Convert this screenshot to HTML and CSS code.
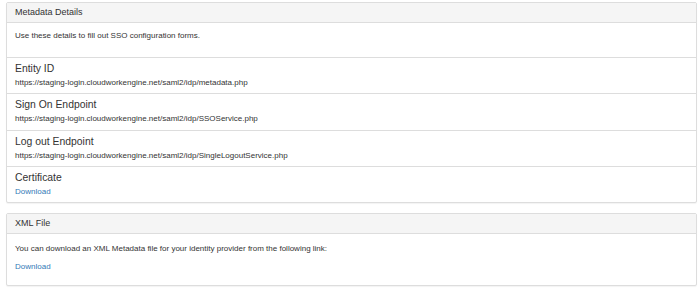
FILE: index.html
```html
<!DOCTYPE html>
<html lang="en">
<head>
    <meta charset="UTF-8">
    <meta name="viewport" content="width=device-width, initial-scale=1.0">
    <title>Metadata Details</title>
    <link rel="stylesheet" href="styles.css">
</head>
<body>
<div class="page">
    <div class="panel">
        <div class="panel-heading">Metadata Details</div>
        <div class="panel-body intro">
            <p>Use these details to fill out SSO configuration forms.</p>
        </div>
        <ul class="list-group">
            <li class="list-group-item">
                <h4>Entity ID</h4>
                <p>https://staging-login.cloudworkengine.net/saml2/idp/metadata.php</p>
            </li>
            <li class="list-group-item">
                <h4>Sign On Endpoint</h4>
                <p>https://staging-login.cloudworkengine.net/saml2/idp/SSOService.php</p>
            </li>
            <li class="list-group-item">
                <h4>Log out Endpoint</h4>
                <p>https://staging-login.cloudworkengine.net/saml2/idp/SingleLogoutService.php</p>
            </li>
            <li class="list-group-item">
                <h4>Certificate</h4>
                <p><a href="#">Download</a></p>
            </li>
        </ul>
    </div>

    <div class="panel">
        <div class="panel-heading">XML File</div>
        <div class="panel-body">
            <p>You can download an XML Metadata file for your identity provider from the following link:</p>
            <p><a href="#">Download</a></p>
        </div>
    </div>
</div>
</body>
</html>
```

FILE: styles.css
```css
body {
    margin: 0;
    background: #fff;
    color: #333;
    font-family: "Liberation Sans", Arial, sans-serif;
    font-size: 8px;
    line-height: 11px;
}
.page {
    padding: 2px 3px 0 6px;
}
a {
    color: #337ab7;
    text-decoration: none;
}

/* panels */
.panel {
    border: 1px solid #ddd;
    border-radius: 2px;
    box-shadow: 0 1px 1px rgba(0, 0, 0, .05);
    margin-bottom: 10px;
    background: #fff;
}
.panel-heading {
    background: #f5f5f5;
    border-bottom: 1px solid #ddd;
    padding: 0 8px;
    font-size: 9px;
    line-height: 19px;
}
.panel-body {
    padding: 9px 8px 13px;
}
.panel-body p {
    margin: 0 0 7px;
}
.panel-body p:last-child {
    margin-bottom: 0;
}
.panel-body.intro {
    padding: 7px 8px 16px;
}

/* list rows */
.list-group {
    list-style: none;
    margin: 0;
    padding: 0;
}
.list-group-item {
    border-top: 1px solid #ddd;
    padding: 4px 8px 5.33px;
}
.list-group-item h4 {
    margin: 0 0 2px;
    font-size: 10.4px;
    font-weight: normal;
    line-height: 13px;
}
.list-group-item p {
    margin: 0;
}
```
